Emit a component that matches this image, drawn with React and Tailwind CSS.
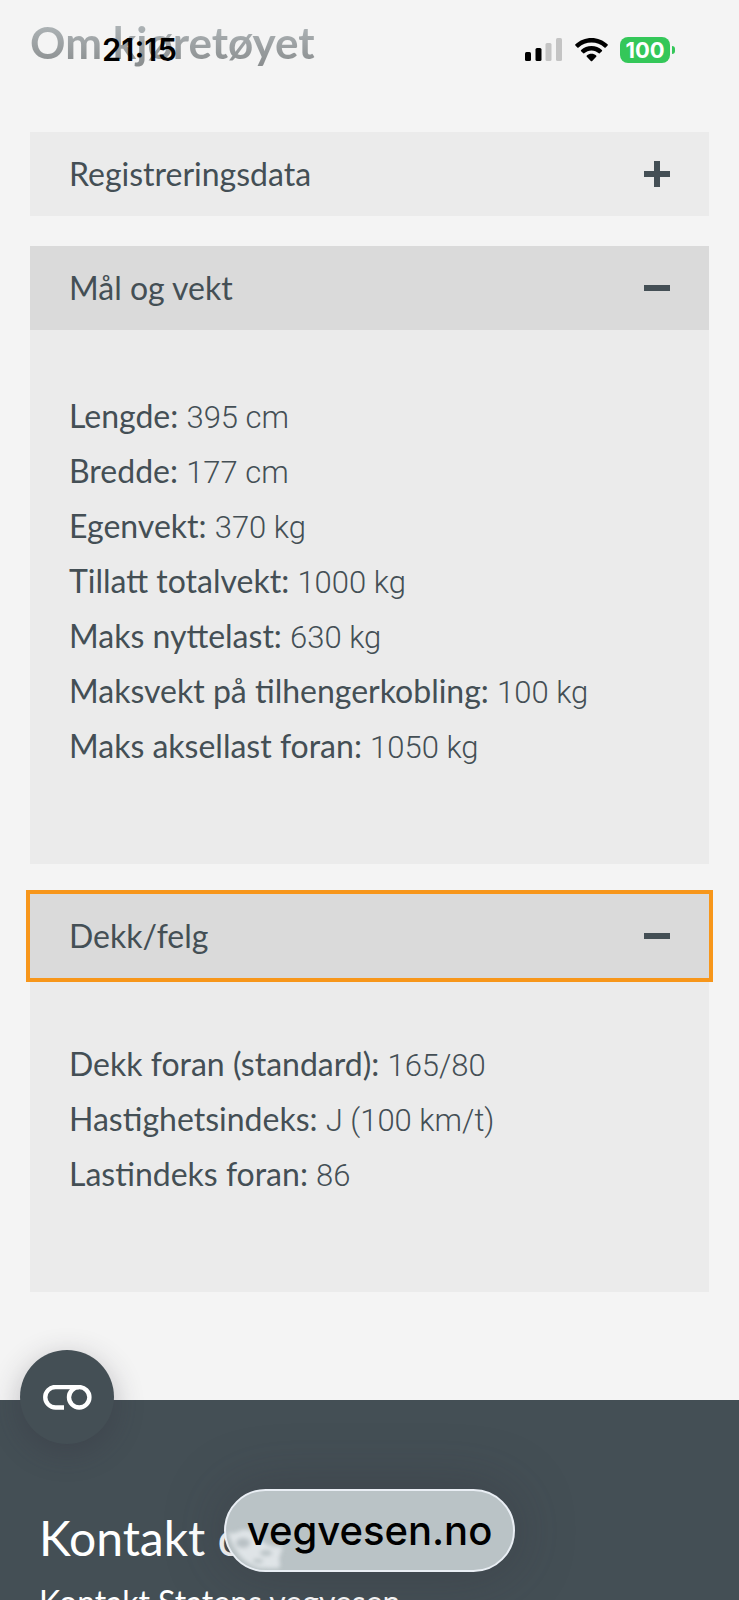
import React, { useState } from "react";

const sections = [
  { id: "registrering", title: "Registreringsdata", rows: [] },
  {
    id: "maal",
    title: "Mål og vekt",
    rows: [
      { label: "Lengde", value: "395 cm" },
      { label: "Bredde", value: "177 cm" },
      { label: "Egenvekt", value: "370 kg" },
      { label: "Tillatt totalvekt", value: "1000 kg" },
      { label: "Maks nyttelast", value: "630 kg" },
      { label: "Maksvekt på tilhengerkobling", value: "100 kg" },
      { label: "Maks aksellast foran", value: "1050 kg" },
    ],
  },
  {
    id: "dekk",
    title: "Dekk/felg",
    rows: [
      { label: "Dekk foran (standard)", value: "165/80" },
      { label: "Hastighetsindeks", value: "J (100 km/t)" },
      { label: "Lastindeks foran", value: "86" },
    ],
  },
];

function ToggleIcon({ open }) {
  return (
    <svg width="26" height="26" viewBox="0 0 26 26" fill="#444f55" aria-hidden="true">
      <rect x="0" y="10" width="26" height="6" />
      {!open && <rect x="10" y="0" width="6" height="26" />}
    </svg>
  );
}

function Section({ section, open, focused, onToggle }) {
  return (
    <section className="bg-[#ebebeb]">
      <h2>
        <button
          type="button"
          onClick={onToggle}
          aria-expanded={open}
          className={`flex w-full items-center justify-between h-[84px] px-[39px] text-left text-[32px] leading-[40px] outline-[#f7961a]
            ${open ? "bg-[#dadada]" : "bg-[#ebebeb]"}
            ${focused ? "outline-4" : ""}
          `}
        >
          {section.title}
          <ToggleIcon open={open} />
        </button>
      </h2>
      {open && (
        <ul className="pt-[58px] pb-[91px] px-[39px]">
          {section.rows.map((row) => (
            <li key={row.label} className="text-[32px] leading-[55px]">
              {row.label}: <span className="font-['Roboto'] text-[31px] leading-[40px] font-light">{row.value}</span>
            </li>
          ))}
        </ul>
      )}
    </section>
  );
}

function StatusBar() {
  return (
    <div className="absolute top-0 inset-x-0 flex items-center justify-between h-[100px] pl-[102px] pr-[64px] font-['Inter'] text-black">
      <span className="text-[31px] leading-[40px] font-semibold">21:15</span>
      <div className="flex items-center gap-3">
        <svg width="38" height="24" viewBox="0 0 38 24" aria-label="Signal">
          <rect x="0" y="14" width="6" height="9" rx="1.5" />
          <rect x="10.500" y="10" width="6" height="13" rx="1.5" />
          <rect x="20.500" y="5" width="6" height="18" rx="1.5" fill="#c4c4c4" />
          <rect x="31" y="0" width="6" height="23" rx="1.5" fill="#c4c4c4" />
        </svg>
        <svg width="33" height="24" viewBox="0 0 33 24" aria-label="Wi-Fi">
          <path d="M16.500 0C10.400 0 4.700 2.300 .4 6.300c-.4.4-.4.900 0 1.300l1.900 1.900c.4.400.9.400 1.300 0C7.100 6.300 11.600 4.600 16.500 4.600s9.400 1.700 12.900 4.900c.4.400.9.400 1.300 0l1.900-1.900c.4-.4.400-.9 0-1.300C28.300 2.300 22.600 0 16.500 0z" />
          <path d="M16.500 7.900c-4 0-7.600 1.500-10.400 4-.4.400-.4.900 0 1.300l1.900 1.900c.4.400.9.400 1.200.1 2-1.700 4.500-2.800 7.300-2.800s5.300 1.100 7.300 2.800c.4.300.9.300 1.200-.1l1.900-1.900c.4-.4.400-.9 0-1.300-2.800-2.500-6.400-4-10.400-4z" />
          <path d="M16.500 15.800c-1.800 0-3.400.6-4.700 1.700-.4.400-.4.900 0 1.300l4 4.100c.4.400 1 .4 1.400 0l4-4.100c.4-.4.400-.9 0-1.300-1.300-1.100-2.900-1.700-4.700-1.700z" />
        </svg>
        <div className="flex items-center gap-[2px]">
          <span className="w-[50px] h-[26px] rounded-[8px] bg-[#34c759] text-center text-[22px] leading-[26px] font-bold text-white">
            100
          </span>
          <span className="w-[3px] h-2 rounded-r-full bg-[#34c759]"></span>
        </div>
      </div>
    </div>
  );
}

export default function App() {
  const [openIds, setOpenIds] = useState(["maal", "dekk"]);
  const [focusedId, setFocusedId] = useState("dekk");

  const toggle = (id) => {
    setFocusedId(id);
    setOpenIds((prev) => (prev.includes(id) ? prev.filter((x) => x !== id) : [...prev, id]));
  };

  return (
    <div className="relative flex flex-col h-screen overflow-hidden bg-[#f4f4f4] text-[#444f55] font-['Lato',sans-serif]">
      <main className="px-[30px] pt-3 pb-[108px]">
        <h1 className="w-fit mb-[60px] text-[44px] leading-[60px] font-bold text-transparent bg-clip-text bg-linear-to-b from-[#b9c0c3] to-[#858889]">
          Om kjøretøyet
        </h1>
        <div className="flex flex-col gap-[30px]">
          {sections.map((section) => (
            <Section
              key={section.id}
              section={section}
              open={openIds.includes(section.id)}
              focused={focusedId === section.id}
              onToggle={() => toggle(section.id)}
            />
          ))}
        </div>
      </main>

      <footer className="flex-1 px-[39px] pt-[106px] bg-[#444f55] text-white">
        <h2 className="text-[48px] leading-[64px] whitespace-nowrap">Kontakt oss</h2>
        <a href="#kontakt" className="block mt-[10px] text-[32px] leading-[44px] whitespace-nowrap">
          Kontakt Statens vegvesen
        </a>
      </footer>

      <StatusBar />

      {/* Cookie settings */}
      <button
        type="button"
        aria-label="Informasjonskapsler"
        className="absolute left-5 bottom-[156px] flex items-center justify-center size-[94px] rounded-full bg-[#444f55] shadow-[0_8px_30px_rgba(50,45,60,0.3)]"
      >
        <svg width="49" height="25" viewBox="0 0 49 25" fill="none" stroke="#fff" strokeWidth="4.4">
          <path d="M21 22.500H12.500a10.250 10.250 0 0 1 0-20.500H36" />
          <circle cx="36.200" cy="12.300" r="10.200" />
        </svg>
      </button>

      {/* Browser address pill */}
      <div className="absolute bottom-7 inset-x-0 flex justify-center font-['Inter']">
        <button
          type="button"
          className="relative w-[291px] h-[83px] overflow-hidden rounded-full border-2 border-[#e9eef4] bg-[#bac3c6] text-[40px] leading-[50px] font-medium text-black shadow-[0_0_60px_rgba(50,45,55,0.35)]"
        >
          <svg className="absolute left-0 bottom-0 blur-[2px]" width="62" height="46" viewBox="0 0 62 46">
            <path d="M2 8c8 4 12-4 20-2s14 14 22 16 14-2 12 4-4 8-2 14-8 4-16 4-26-4-36-36z" fill="#dfe4e7" />
            <ellipse cx="17" cy="19" rx="7" ry="5" fill="#b9c1c5" />
            <ellipse cx="40" cy="29" rx="6" ry="3" fill="#bac3c6" />
            <ellipse cx="32" cy="37" rx="5" ry="2" fill="#bac3c6" />
          </svg>
          <span className="relative">vegvesen.no</span>
        </button>
      </div>
    </div>
  );
}
